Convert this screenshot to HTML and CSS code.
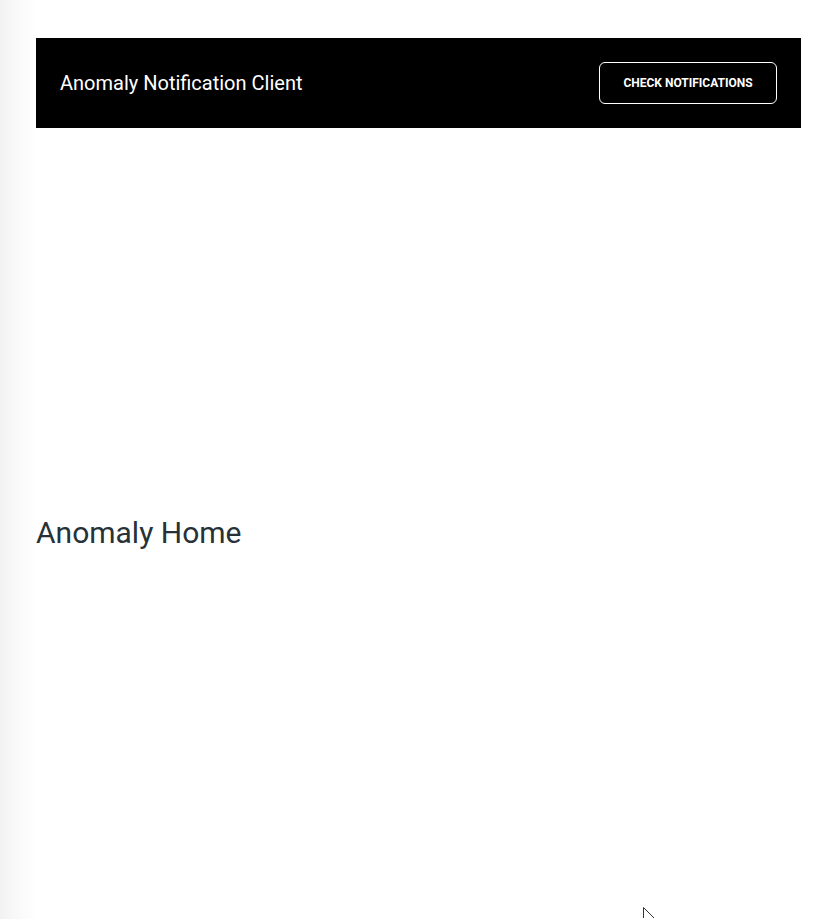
FILE: index.html
```html
<!DOCTYPE html>
<html lang="en">
<head>
<meta charset="utf-8">
<title>Anomaly Notification Client</title>
<link rel="stylesheet" href="styles.css">
</head>
<body>
<div class="page">
  <header class="topbar">
    <span class="brand">Anomaly Notification Client</span>
    <button class="check-btn" type="button">Check Notifications</button>
  </header>
  <main class="content">
    <h1 class="home-title">Anomaly Home</h1>
  </main>
</div>
<svg class="cursor" width="14" height="14" viewBox="0 0 14 14" aria-hidden="true">
  <path d="M0.5 0.5 V11 M0.5 0.5 L11 11" stroke="#333" stroke-width="1" fill="none"/>
</svg>
</body>
</html>
```
FILE: styles.css
```css
html, body {
  margin: 0;
  padding: 0;
  height: 100%;
}
body {
  background: linear-gradient(to right, #f2f2f2 0px, #fafafa 20px, #ffffff 36px);
  font-family: Roboto, "Noto Sans", sans-serif;
  overflow: hidden;
}
.page {
  padding: 38px 38px 0 36px;
}
.topbar {
  width: 765px;
  height: 90px;
  background: #000;
  display: flex;
  align-items: center;
  justify-content: space-between;
  padding: 0 24px;
  box-sizing: border-box;
}
.brand {
  color: #fff;
  font-size: 20px;
  font-weight: 400;
}
.check-btn {
  width: 178px;
  height: 42px;
  background: transparent;
  border: 1px solid #fff;
  border-radius: 6px;
  color: #fff;
  font-family: Roboto, sans-serif;
  font-weight: 700;
  font-size: 12px;
  text-transform: uppercase;
  letter-spacing: 0;
  cursor: pointer;
}
.content {
  padding-top: 387px;
}
.home-title {
  margin: 0;
  font-size: 30px;
  font-weight: 400;
  color: #263238;
}
.cursor {
  position: absolute;
  left: 643px;
  top: 907px;
}
```
